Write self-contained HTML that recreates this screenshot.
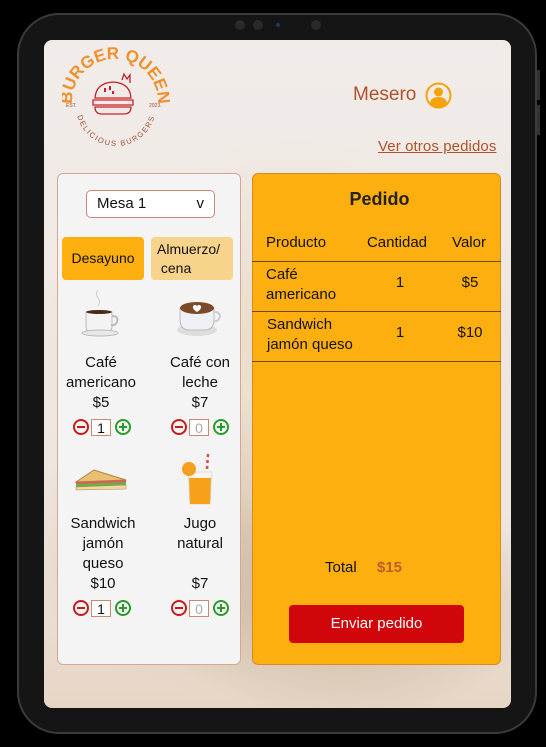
<!DOCTYPE html>
<html><head><meta charset="utf-8"><style>
*{margin:0;padding:0;box-sizing:border-box}
body{width:546px;height:747px;background:#000;position:relative;overflow:hidden;font-family:"Liberation Sans",sans-serif;color:#111}
.a{position:absolute}
.body{left:17px;top:13px;width:520px;height:721px;border-radius:42px;background:#151515;border:2px solid #3a3a3a}
.screen{left:44px;top:40px;width:467px;height:668px;border-radius:8px;overflow:hidden;
background:radial-gradient(ellipse 200px 120px at 300px 560px,#c9b49c 0%,rgba(210,190,170,0) 100%),
radial-gradient(ellipse 180px 150px at 160px 500px,#d8c4ae 0%,rgba(230,215,200,0) 100%),
radial-gradient(ellipse 260px 200px at 250px 300px,#eadcc8 0%,rgba(240,233,229,0) 100%),
linear-gradient(#f1ece9,#eee6e0 70%,#e6d6c6)}
.t{position:absolute;font-size:15px;text-align:center;line-height:20px}
.lp{left:57px;top:173px;width:184px;height:492px;background:#f5f4f4;border:1px solid #d8a690;border-radius:6px}
.rp{left:252px;top:173px;width:249px;height:492px;background:#feaf10;border:1px solid #d98a20;border-radius:6px}
.line{position:absolute;left:252px;width:249px;height:1px;background:#6b4a10}
.ctl{position:absolute;height:18px;width:60px}
.ctl .m,.ctl .p{position:absolute;top:0;width:16px;height:16px;border-radius:50%;border:2px solid}
.ctl .m{left:0;border-color:#c91a1a}.ctl .p{left:42px;border-color:#2a9a2a}
.ctl .m:after,.ctl .p:after{content:"";position:absolute;left:2px;top:5px;width:8px;height:2px;background:currentColor}
.ctl .m{color:#c91a1a}.ctl .p{color:#2a9a2a}
.ctl .p:before{content:"";position:absolute;left:5px;top:2px;width:2px;height:8px;background:#2a9a2a}
.ctl .b{position:absolute;left:18px;top:0;width:20px;height:17px;background:#fff;border:1px solid #c98a70;font-size:14px;text-align:center;line-height:16px}
</style></head><body>
<div class="a body"></div>
<div class="a" style="left:235px;top:20px;width:10px;height:10px;border-radius:50%;background:#2a2a2a"></div>
<div class="a" style="left:253px;top:20px;width:10px;height:10px;border-radius:50%;background:#2a2a2a"></div>
<div class="a" style="left:276px;top:23px;width:4px;height:4px;border-radius:50%;background:#1d3a66"></div>
<div class="a" style="left:311px;top:20px;width:10px;height:10px;border-radius:50%;background:#2a2a2a"></div>
<div class="a" style="left:537px;top:70px;width:3px;height:30px;background:#333"></div>
<div class="a" style="left:537px;top:105px;width:3px;height:30px;background:#333"></div>
<div class="a screen"></div>

<!-- logo -->
<svg class="a" style="left:62px;top:46px" width="110" height="100" viewBox="0 0 110 100">
<defs><path id="arc" d="M10,56 A43,43 0 0 1 96,56"/><path id="arc2" d="M14,60 A40,40 0 0 0 94,60"/></defs>
<text font-family="Liberation Sans" font-weight="bold" font-size="17" fill="#f0902a"><textPath href="#arc" startOffset="50%" text-anchor="middle">BURGER QUEEN</textPath></text>
<text font-family="Liberation Sans" font-size="7.5" fill="#a05030" letter-spacing="1.5"><textPath href="#arc2" startOffset="50%" text-anchor="middle">DELICIOUS BURGERS</textPath></text>
<text x="4" y="61" font-size="5" fill="#a05030" font-family="Liberation Sans">EST.</text>
<text x="87" y="61" font-size="5" fill="#a05030" font-family="Liberation Sans">2023.</text>
<g fill="none" stroke="#c8202a" stroke-width="1.3">
<path d="M33,52 Q34,37 51,36 Q68,37 69,52 Z"/><path d="M31,54 H71 V59 H31 Z"/><path d="M33,61 H69 Q69,68 62,68 H40 Q33,68 33,61Z"/>
<path d="M60,34 L62,28 L65,33 L68,29 L68,37"/></g>
<g fill="#c8202a"><rect x="42" y="42" width="2" height="4"/><rect x="47" y="40" width="2" height="4"/><rect x="50" y="45" width="2" height="3"/></g>
</svg>

<div class="a" style="left:353px;top:84px;font-size:19px;color:#b0522a">Mesero</div>
<svg class="a" style="left:425px;top:82px" width="27" height="27" viewBox="0 0 27 27"><circle cx="13.5" cy="13.5" r="12" fill="none" stroke="#f5a30a" stroke-width="2"/><circle cx="13.5" cy="10" r="4.5" fill="#f5a30a"/><path d="M5,21 Q6,15 13.5,15 Q21,15 22,21 Q18,25.5 13.5,25.5 Q9,25.5 5,21Z" fill="#f5a30a"/></svg>
<div class="a" style="left:378px;top:138px;font-size:15px;color:#b0522a;text-decoration:underline;letter-spacing:0.1px">Ver otros pedidos</div>

<div class="a lp"></div>
<div class="a" style="left:86px;top:190px;width:129px;height:28px;background:#fff;border:1px solid #c98a70;border-radius:5px;font-size:15px;line-height:26px;padding-left:10px">Mesa 1<span style="position:absolute;right:10px">v</span></div>
<div class="a" style="left:62px;top:237px;width:82px;height:43px;background:#feaf10;border-radius:4px;font-size:14px;line-height:43px;text-align:center">Desayuno</div>
<div class="a" style="left:151px;top:237px;width:82px;height:43px;background:#f8d38c;border-radius:4px;font-size:14px;line-height:19px;padding:3px 0 0 6px">Almuerzo/<br>&nbsp;cena</div>

<!-- images -->
<svg class="a" style="left:80px;top:288px" width="44" height="50" viewBox="0 0 44 50"><path d="M18,2 q-3,4 0,8 q3,4 0,8" stroke="#ccc" fill="none"/><path d="M6,24 H32 V38 Q32,44 26,44 H12 Q6,44 6,38Z" fill="#f3f3f3" stroke="#bbb"/><ellipse cx="19" cy="24" rx="13" ry="2" fill="#4a2a15"/><path d="M32,28 q7,0 5,6 q-2,4 -6,3" fill="none" stroke="#bbb" stroke-width="2"/><ellipse cx="20" cy="45" rx="18" ry="3" fill="#e8e8e8" stroke="#bbb"/></svg>
<svg class="a" style="left:176px;top:298px" width="48" height="40" viewBox="0 0 48 40"><ellipse cx="21" cy="32" rx="20" ry="6" fill="#ddd"/><path d="M4,10 H38 V22 Q38,32 28,32 H14 Q4,32 4,22Z" fill="#eef0f3" stroke="#bbb"/><ellipse cx="21" cy="10" rx="17" ry="6" fill="#7a4a2a"/><path d="M17,8 q4,-3 4,2 q0,-5 4,-2 q1,3 -4,6 q-5,-3 -4,-6z" fill="#fff"/><path d="M38,14 q8,0 5,7 q-2,3 -6,2" fill="none" stroke="#ccc" stroke-width="2"/></svg>
<svg class="a" style="left:74px;top:465px" width="54" height="27" viewBox="0 0 54 27"><path d="M2,17 L20,5 L52,15 Z" fill="#e8c070" stroke="#b08040"/><path d="M2,17 L52,15 L52,19 L2,21Z" fill="#e05a5a"/><path d="M2,19 L52,17 L52,21 L2,22Z" fill="#6ab04a"/><path d="M2,22 L52,20 L52,24 L2,25Z" fill="#f0d9a0" stroke="#b08040" stroke-width="0.5"/></svg>
<svg class="a" style="left:180px;top:454px" width="38" height="54" viewBox="0 0 38 54"><path d="M28,0 L26,30" stroke="#d44" stroke-width="2.5" stroke-dasharray="3 3"/><path d="M8,18 H32 L30,50 H10Z" fill="#fcf4ea" stroke="#ddd"/><path d="M9,24 H31 L30,50 H10Z" fill="#f7a11a"/><circle cx="9" cy="15" r="7" fill="#f5a020"/></svg>

<div class="t" style="left:55px;top:353px;width:92px">Café<br>americano<br>$5</div>
<div class="t" style="left:153px;top:353px;width:94px">Café con<br>leche<br>$7</div>
<div class="ctl" style="left:73px;top:419px"><div class="m"></div><div class="b">1</div><div class="p"></div></div>
<div class="ctl" style="left:171px;top:419px"><div class="m"></div><div class="b" style="color:#aaa">0</div><div class="p"></div></div>
<div class="t" style="left:55px;top:514px;width:96px">Sandwich<br>jamón<br>queso<br>$10</div>
<div class="t" style="left:153px;top:514px;width:94px">Jugo<br>natural<br><br>$7</div>
<div class="ctl" style="left:73px;top:600px"><div class="m"></div><div class="b">1</div><div class="p"></div></div>
<div class="ctl" style="left:171px;top:600px"><div class="m"></div><div class="b" style="color:#aaa">0</div><div class="p"></div></div>

<div class="a rp"></div>
<div class="a" style="left:252px;top:189px;width:255px;text-align:center;font-size:18px;font-weight:bold;color:#222">Pedido</div>
<div class="t" style="left:266px;top:233px;text-align:left">Producto</div>
<div class="t" style="left:360px;top:233px;width:74px">Cantidad</div>
<div class="t" style="left:446px;top:233px;width:46px">Valor</div>
<div class="line" style="top:261px"></div>
<div class="t" style="left:266px;top:265px;text-align:left">Café<br>americano</div>
<div class="t" style="left:390px;top:273px;width:20px">1</div>
<div class="t" style="left:450px;top:273px;width:40px">$5</div>
<div class="line" style="top:311px"></div>
<div class="t" style="left:267px;top:315px;text-align:left">Sandwich<br>jamón queso</div>
<div class="t" style="left:390px;top:323px;width:20px">1</div>
<div class="t" style="left:450px;top:323px;width:40px">$10</div>
<div class="line" style="top:361px"></div>
<div class="t" style="left:325px;top:558px;font-size:15px">Total</div>
<div class="t" style="left:377px;top:558px;font-size:15px;font-weight:bold;color:#b9612a">$15</div>
<div class="a" style="left:289px;top:605px;width:175px;height:38px;background:#d0060a;border-radius:4px;color:#fff;font-size:15px;line-height:38px;text-align:center">Enviar pedido</div>
</body></html>
